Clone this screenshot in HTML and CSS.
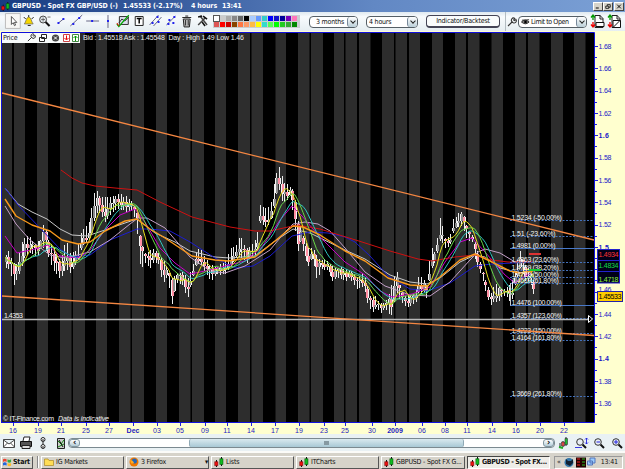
FILE: index.html
```html
<!DOCTYPE html>
<html lang="en">
<head>
  <meta charset="UTF-8" />
  <title>GBPUSD - Spot FX GBP/USD</title>
  <link rel="stylesheet" href="styles.css">
</head>
<body>
  <svg class="defs">
    <symbol id="candles" viewBox="0 0 10 10"><path d="M2.5 3v7M7.5 0v9" stroke="#111"/><path d="M.7 4.7h3.2v4H.7z" fill="#e11" stroke="#600" stroke-width=".5"/><path d="M5.8 1.7h3.2v5.8H5.8z" fill="#1b2" stroke="#040" stroke-width=".5"/></symbol>
    <symbol id="wrench" viewBox="0 0 10 10"><path d="M1 9l4.5-4.5M5.3 5a2 2 0 0 1 2.5-3.6L6.7 3l.6.6 1.7-1A2.2 2.2 0 0 1 5.3 5z" fill="none" stroke="#333" stroke-width="1.1"/></symbol>
    <symbol id="lens" viewBox="0 0 12 12"><path d="M7.5 7.5L11 11" stroke="#111" stroke-width="2"/><circle cx="5" cy="5" r="3.3" fill="#e8eef4" stroke="#333"/></symbol>
    <symbol id="orders" viewBox="0 0 15 15"><path d="M5 1.5h5l3 3v9H5z" fill="#fff" stroke="#222"/><path d="M10 1v4h3" fill="none" stroke="#222"/><path d="M3 1v5M1 3.5L3 1l2 2.5" stroke="#090" fill="none" stroke-width="1.3"/><path d="M3 8v5M1 10.5L3 13l2-2.5" stroke="#e00" fill="none" stroke-width="1.3"/></symbol>
  </svg>

  <div class="titlebar">
    <svg class="app-icon"><use href="#candles"/></svg>
    <span class="t-name">GBPUSD - Spot FX GBP/USD (-)</span>
    <span class="t-price">1.45533 (-2.17%)</span>
    <span class="t-frame">4 hours</span>
    <span class="t-time">13:41</span>
    <div class="win-btns">
      <b><svg viewBox="0 0 8 7"><path d="M1 5.5h4" stroke="#000" stroke-width="1.3"/></svg></b>
      <b><svg viewBox="0 0 8 7"><path d="M3 3V1h4v3.5H5M1 3h4v3H1z" stroke="#000" fill="none"/></svg></b>
      <b><svg viewBox="0 0 8 7"><path d="M1.5 1l5 5M6.500 1l-5 5" stroke="#000" stroke-width="1.2"/></svg></b>
    </div>
  </div>

  <div class="toolbar">
    <!-- drawing tools -->
    <svg class="tools" viewBox="0 0 215 19">
      <path d="M5.500 1.500h15v15h-15z" fill="#f7f7f5" stroke="#bbb"/>
      <path d="M11.500 4.500v8l1.800-1.800 1.300 3 1.200-.6-1.300-2.700h2.500z" fill="#fff" stroke="#333" stroke-width=".8"/>
      <path d="M24.500 12c2-2 1.500-6.500 4.500-7 3 .5 2.500 5 4.500 7z" fill="#f6d600" stroke="#666" stroke-width=".7"/><path d="M24 5l2 2M34 5l-2 2M29 3v2M28 13.500h3" stroke="#222"/>
      <circle cx="43.500" cy="7.500" r="3.500" fill="#dfe6ea" stroke="#444"/><path d="M46 10l4 4" stroke="#111" stroke-width="2"/><path d="M43.500 5.500v4M41.500 7.500h4M48 5h3" stroke="#555" stroke-width=".8"/>
      <g stroke="#557" stroke-width=".9">
        <path d="M59 11l5-4M71 14L83 3M87 9h13M109 3v13M151 13l9-10M155 14l8-9M168 13l9-9"/>
      </g>
      <g fill="#22e">
        <path d="M58 10h2v2h-2zM63 6h2v2h-2zM73 11h2v2h-2zM79 5h2v2h-2zM92 8h2v2h-2zM108 8h2v2h-2zM153 10h2v2h-2zM158 4h2v2h-2zM159 9h2v2h-2zM169 11h2v2h-2zM175 4h2v2h-2zM170 7h2v2h-2zM174 10h2v2h-2z"/>
      </g>
      <path d="M120.500 4.500h9v8h-9z" fill="#dde" stroke="#333"/><path d="M120 11l3-4 3 2 4-4" fill="none" stroke="#333"/><path d="M118 12l2 2.500L130 3" fill="none" stroke="#0a0" stroke-width="1.300"/><path d="M118 11l2 3" stroke="#e00"/>
      <path d="M136.500 4.500h8v9h-8z" fill="#fff" stroke="#222"/><path d="M138 6.500h5M140.500 6.500v5" stroke="#000" stroke-width="1.500"/>
      <path d="M185 7h7l-.8 8h-5.400zM184 5.500h9M187 4h3" fill="#bbb" stroke="#222"/><path d="M187.300 8v5.500M190 8v5.500" stroke="#333"/>
      <path d="M200 13l7-7M202 4l7 9" stroke="#444" stroke-width="1.500"/><path d="M200 5l4-1M205 4l4 3M204 10l3 4" stroke="#111" stroke-width="1.600"/>
    </svg>
    <div class="palette" id="palette"></div>
    <div class="select period">3 months<i></i></div>
    <div class="select frame">4 hours<i></i></div>
    <div class="button">Indicator/Backtest</div>
    <i class="divider"></i>
    <svg class="wrench"><use href="#wrench"/></svg>
    <div class="select order">
      <svg viewBox="0 0 10 8"><path d="M.5 4q4-4 8.500 0-4 4-8.500 0zM1 2l8-.5" fill="#888" stroke="#222"/><circle cx="5" cy="4" r="1.500"/></svg>
      Limit to Open<i></i>
    </div>
    <svg class="order-icon" viewBox="0 0 15 15"><use href="#orders"/><path d="M6 8.500h8v4H6z" fill="#fff" stroke="#111"/></svg>
    <svg class="order-icon" viewBox="0 0 15 15"><use href="#orders"/><path d="M6 6.500h7.500v7H6zM6 13.500l7-7" fill="#fff" stroke="#111"/></svg>
  </div>

  <div class="chart">
    <svg id="plot" viewBox="0 31 625 403">
      <rect x="2" y="33" width="592" height="389" fill="#000"/>
      <g id="bands"></g>
      <g id="candleLayer" shape-rendering="crispEdges"></g>
      <g id="averages" fill="none" stroke-linejoin="round"></g>
      <g id="levels"></g>
      <!-- support line and trend channel -->
      <path d="M2 319.500h586" stroke="#b8b8b8" stroke-width="1.300"/>
      <path d="M588.500 315.500v7l4-3.500z" fill="#000" stroke="#fff"/>
      <path d="M2 93L594 240M2 296L594 335.500" stroke="#f58742" stroke-width="1.350"/>
      <text x="4" y="318" class="white" textLength="19">1.4353</text>
      <text x="3" y="421" class="white" textLength="51">© IT-Finance.com</text>
      <text x="58" y="421" class="white italic" textLength="51">Data is indicative</text>
      <path d="M1.500 422V32.500H594.500V422.500H1" fill="none" stroke="#11d" stroke-width="1"/>
      <g id="axes"></g>
      <g id="tags"></g>
    </svg>
    <div class="price-bar">
      <div class="price-tools">
        <span>Price</span>
        <svg viewBox="0 0 52 10">
          <use href="#wrench" width="9" height="9" x="0"/>
          <path d="M14.500 1.500h5v4h-5zM12.500 4.500h5v4h-5z" fill="#fff" stroke="#222"/>
          <circle cx="28.500" cy="5" r="3.600" fill="#444"/><path d="M27 3.500l3 3M30 3.500l-3 3" stroke="#fff"/>
          <path d="M36.500 1.500h6v7h-6z" fill="#fff" stroke="#c44"/><path d="M39.500 2.500v4M37.500 5l2 2 2-2" stroke="#e00" fill="none"/>
          <path d="M45.500 1.500h6v7h-6z" fill="#fff" stroke="#484"/><path d="M48.500 8V3M46.500 5l2-2 2 2" stroke="#090" fill="none"/>
        </svg>
      </div>
      <span class="quote">Bid : 1.45518 Ask : 1.45548&nbsp; Day : High 1.49 Low 1.46</span>
    </div>
  </div>

  <div class="footer">
    <svg class="foot-icons" viewBox="0 0 68 16">
      <path d="M3.500 4.500h11v8h-11zM3.500 5l5.500 4 5.500-4M3.500 12l4-4M14.500 12l-4-4" fill="#fff" stroke="#333" stroke-width=".9"/>
      <path d="M23 6l1-4h6l-1 4" fill="#fff" stroke="#222"/><path d="M20.500 6.500h11v5h-11z" fill="#555" stroke="#111"/><path d="M22 10.500h8v3h-8z" fill="#ddd" stroke="#222"/>
      <g fill="#fff" stroke="#222"><circle cx="43" cy="4.500" r="2"/><circle cx="43" cy="11.500" r="2"/></g><path d="M43 4v2M43 11v2M43 7v2" stroke="#222"/>
      <path d="M57.500 3.500h7v10h-7z" fill="#ccc" stroke="#222"/><path d="M58 6l3 3 3-4M58 12l6-3" stroke="#181" fill="none"/><path d="M59 5l4 7" stroke="#111"/>
    </svg>
    <div class="scroll">
      <b class="arrow">‹</b>
      <div class="thumb"><i></i></div>
      <b class="arrow right">›</b>
    </div>
    <svg class="zoom-icons" viewBox="0 0 66 16">
      <path d="M2 13V8M5 12V6M8 11V2" stroke="#222"/><path d="M3.500 7h3v4h-3z" fill="#d44" stroke="#333" stroke-width=".6"/><path d="M7 3.500h2.500v6H7z" fill="#2b3" stroke="#333" stroke-width=".6"/><path d="M1 12l4 1" stroke="#2a2" stroke-width="2"/>
      <use href="#lens" x="17" y="2" width="12" height="12"/><path d="M28.500 3v6M27 4.500L28.500 3 30 4.500M27 7.500L28.500 9 30 7.500M17 12.500h7" fill="none" stroke="#22d" stroke-width=".9"/>
      <use href="#lens" x="35" y="2" width="12" height="12"/><path d="M38.500 7h3.500" stroke="#22d"/>
      <use href="#lens" x="53" y="2" width="12" height="12"/><path d="M56 7h4M58 5v4" stroke="#22d"/>
    </svg>
  </div>

  <div class="taskbar">
    <div class="task start"><svg viewBox="0 0 10 10"><path d="M0 2q2-1.500 4 0v3q-2-1.500-4 0z" fill="#e43"/><path d="M5 2q2 1.500 4 0v3q-2 1.500-4 0z" fill="#3a4"/><path d="M0 6q2-1.500 4 0v3q-2-1.500-4 0z" fill="#26d"/><path d="M5 6q2 1.500 4 0v3q-2 1.500-4 0z" fill="#fb2"/></svg>Start</div>
    <i class="grip"></i>
    <div class="task folder"><svg viewBox="0 0 10 10"><path d="M.5 2h3.500l1 1.500h4.500v5h-9z" fill="#fd5" stroke="#a82" stroke-width=".7"/></svg>IG Markets</div>
    <div class="task firefox"><svg viewBox="0 0 10 10"><circle cx="5" cy="5" r="4.500" fill="#e70"/><circle cx="5.300" cy="4" r="2.600" fill="#26b"/><path d="M1 3q3 0 4 3-2 1-3 0z" fill="#fa2"/></svg>3 Firefox<em>▾</em></div>
    <div class="task lists"><svg><use href="#candles"/></svg>Lists</div>
    <div class="task itcharts"><svg><use href="#candles"/></svg>ITCharts</div>
    <div class="task gbp"><svg><use href="#candles"/></svg>GBPUSD - Spot FX G...</div>
    <div class="task active"><svg><use href="#candles"/></svg>GBPUSD - Spot FX...</div>
    <div class="tray">
      <span>«</span>
      <svg viewBox="0 0 32 11"><circle cx="5" cy="5.500" r="4.500" fill="#37a"/><path d="M2 2l2 2h3l2-2v4L6 9 2 7z" fill="#123"/><path d="M12 .5h10v10H12z" fill="#200"/><path d="M13 2h3M13 5h3M13 8h3" stroke="#e22"/><path d="M18 2h3M18 5h3M18 8h3" stroke="#2b2"/><path d="M26 1h5v5h-5zM23.500 4h5v4h-5z" fill="#9cf" stroke="#57b"/></svg>
      <span class="clock">13:41</span>
    </div>
  </div>

  <script src="chart.js"></script>
</body>
</html>
```
FILE: styles.css
```css
body {
  margin: 0;
  width: 625px;
  height: 469px;
  overflow: hidden;
  display: flex;
  flex-direction: column;
  background: #ffffcf;
  font-family: "DejaVu Sans Condensed", "DejaVu Sans", sans-serif;
  font-size: 7px;
  letter-spacing: -0.2px;
  color: #111;
  white-space: nowrap;
}

body * {
  box-sizing: border-box;
}

svg {
  display: block;
  flex: none;
}

.defs {
  position: absolute;
  width: 0;
  height: 0;
}

/* title bar */
.titlebar {
  height: 12px;
  flex: none;
  display: flex;
  align-items: center;
  padding: 0 1px 0 1px;
  background: linear-gradient(90deg, #173c82 0, #35599c 25%, #6288c4 60%, #7ba0d5 100%);
  color: #fff;
  font: bold 7px "DejaVu Sans Condensed", sans-serif;
  letter-spacing: -0.1px;
}

.app-icon {
  width: 9px;
  height: 9px;
}

.t-name {
  width: 113px;
  padding-left: 2px;
}

.t-price {
  width: 68px;
}

.t-frame {
  width: 31px;
}

.win-btns {
  display: flex;
  margin-left: auto;
}

.win-btns b {
  width: 10px;
  height: 9px;
  padding: 0 1px;
  background: #d6d3ca;
  border: 1px solid #fff;
  border-right-color: #444;
  border-bottom-color: #444;
}

.win-btns b:last-child {
  margin-left: 1px;
}

.win-btns svg {
  width: 6px;
  height: 7px;
}

/* toolbar */
.toolbar {
  height: 19px;
  flex: none;
  display: flex;
  align-items: center;
  background: linear-gradient(#dfe9f0, #f8fbfd 25%, #e6eef2);
}

.tools {
  width: 213px;
  height: 19px;
}

.palette {
  display: grid;
  grid-template-columns: repeat(14, 5px);
  grid-auto-rows: 5px;
  gap: 1px;
  width: 87px;
  padding: 1px;
  background: #c9ced0;
}

.palette span:first-child {
  outline: 1px solid #555;
}

.select {
  height: 12px;
  display: flex;
  align-items: center;
  border: 1px solid #555f66;
  border-radius: 4px;
  background: #fff;
}

.select i {
  width: 10px;
  height: 10px;
  margin-left: auto;
  border-left: 1px solid #789;
  border-radius: 3px;
  background: linear-gradient(#fff, #b9ced8);
}

.select i::before {
  content: "";
  display: block;
  width: 3px;
  height: 3px;
  margin: 2px 0 0 3px;
  border: solid #222;
  border-width: 0 1px 1px 0;
  transform: rotate(45deg);
}

.period {
  width: 49px;
  margin-left: 9px;
  padding-left: 6px;
}

.frame {
  width: 52px;
  margin-left: 8px;
  padding-left: 2px;
}

.button {
  width: 74px;
  height: 13px;
  margin-left: 8px;
  border: 1px solid #445;
  border-bottom-width: 2px;
  border-radius: 4px;
  background: #fafcfc;
  line-height: 10px;
  text-align: center;
}

.divider {
  width: 1px;
  height: 19px;
  margin-left: 5px;
  background: #b3bcc2;
}

.wrench {
  width: 10px;
  height: 10px;
  margin-left: 1px;
}

.order {
  width: 69px;
  margin-left: 1px;
  padding-left: 2px;
}

.order svg {
  width: 9px;
  height: 8px;
  margin-right: 1px;
}

.order {
  letter-spacing: -0.4px;
}

.order-icon {
  width: 15px;
  height: 15px;
  margin-left: 3px;
}

.order-icon + .order-icon {
  margin-left: 2px;
}

/* chart */
.chart {
  position: relative;
  height: 403px;
  flex: none;
}

.chart > svg {
  width: 625px;
  height: 403px;
}

.chart text {
  font: 7px "Liberation Sans", sans-serif;
  letter-spacing: 0;
}

.chart .white {
  fill: #f4f4f4;
}

.chart .italic {
  font-style: italic;
}

.chart .axis {
  fill: #1a1ac8;
}

.chart .strong {
  font-weight: bold;
}

.price-bar {
  position: absolute;
  left: 2px;
  top: 2px;
  display: flex;
  align-items: center;
}

.price-tools {
  display: flex;
  align-items: center;
  justify-content: space-between;
  width: 78px;
  height: 10px;
  padding: 0 1px;
  background: #f8fbfb;
}

.price-tools svg {
  width: 52px;
  height: 10px;
}

.quote {
  height: 10px;
  padding: 0 2px 0 3px;
  color: #eee;
  font: 7px/10px "Liberation Sans", sans-serif;
  letter-spacing: -0.14px;
}

/* scroll strip */
.footer {
  height: 17px;
  flex: none;
  display: flex;
  align-items: center;
  background: #e9f1f4;
}

.foot-icons {
  width: 68px;
  height: 16px;
}

.scroll {
  width: 487px;
  height: 10px;
  display: flex;
  border: 1px solid #7b8990;
  border-radius: 4px;
  background: #fff;
}

.arrow {
  width: 11px;
  border: 1px solid #8297a0;
  border-radius: 3px;
  background: linear-gradient(#fff, #b2ccd8);
  font-size: 9px;
  line-height: 5px;
  text-align: center;
}

.arrow.right {
  margin-left: auto;
}

.thumb {
  width: 275px;
  margin-left: 109px;
  border: 1px solid #8fa9b5;
  border-width: 0 1px;
  border-radius: 2px;
  background: linear-gradient(#d9e9ef, #a8c8d5);
}

.thumb i {
  display: block;
  width: 5px;
  height: 4px;
  margin: 2px auto 0;
  background: #8699a2;
}

.zoom-icons {
  width: 66px;
  height: 16px;
  margin-left: 3px;
}

/* task bar */
.taskbar {
  flex: 1;
  display: flex;
  align-items: center;
  gap: 2px;
  padding: 2px 1px 0;
  border-top: 2px solid #fbfbf8;
  background: #d6d3ca;
}

.task {
  width: 83px;
  height: 13px;
  flex: none;
  display: flex;
  align-items: center;
  gap: 2px;
  padding-left: 2px;
  border: 1px solid #fff;
  border-right-color: #555;
  border-bottom-color: #555;
}

.task svg {
  width: 10px;
  height: 10px;
}

.task em {
  margin-left: auto;
  font-style: normal;
}

.start {
  width: 32px;
  padding-left: 1px;
  gap: 1px;
  font-weight: bold;
}

.start svg {
  width: 9px;
}

.grip {
  width: 2px;
  height: 12px;
  margin: 0 0 0 2px;
  border-left: 1px solid #888;
  border-right: 1px solid #fff;
}

.gbp {
  width: 84px;
}

.active {
  border-color: #444 #fff #fff #444;
  background: #efede8;
  font-weight: bold;
  letter-spacing: -0.35px;
}

.tray {
  width: 69px;
  height: 13px;
  flex: none;
  margin-left: 2px;
  display: flex;
  align-items: center;
  gap: 3px;
  padding-left: 2px;
  border: 1px solid #999;
  border-right-color: #fff;
  border-bottom-color: #fff;
}

.tray svg {
  width: 32px;
  height: 11px;
}

.clock {
  margin-left: 2px;
}
```
FILE: chart.js
```js
const NS = "http://www.w3.org/2000/svg";

function add(parent, tag, attrs, text) {
  const el = document.createElementNS(NS, tag);
  for (const k in attrs) el.setAttribute(k, attrs[k]);
  if (text) el.textContent = text;
  document.getElementById(parent).appendChild(el);
}

// colour palette, two rows
const colors = ["#fff", "#ccc", "#aaa", "#888", "#666", "#000", "#acf", "#69f", "#3cc", "#00f", "#11c", "#009", "#70b", "#f7b",
  "#d55", "#f00", "#c00", "#840", "#f74", "#f96", "#fb4", "#ff0", "#3dc", "#5f5", "#0f0", "#2c2", "#3a3", "#080"];
const palette = document.getElementById("palette");
colors.forEach(c => {
  const s = document.createElement("span");
  s.style.background = c;
  palette.appendChild(s);
});

// day bands
const bands = [[2,12],[14,25],[37,48],[60,71.500],[73,85],[96,107],[119,130.500],[132,144],[156,167],[179,190.500],[192,204],[215,226],[238,250],[251.500,263],[275.500,286],[298,309.500],[311,323],[334,344],[345.500,357],[359,370.500],[382,394],[395.500,407],[409,420],[432,443],[455,466],[468,479.500],[491.500,503],[515,526],[528,539.500],[551,563],[574,585.500]];
bands.forEach(b => add("bands", "rect", { x: b[0], y: 33, width: b[1] - b[0], height: 389, fill: "#2d2d2d" }));

// x, high, low
const range = [[5,255,268],[9,252,268],[13,263,285],[17,265,279],[20,245,270],[25,237,256],[30,238,252],[36,245,257],[41,238,248],[44,219,248],[47,240,252],[52,245,268],[60,262,278],[66,240,268],[70,255,272],[77,250,262],[81,232,247],[88,226,240],[92,204,234],[95,188,213],[100,198,212],[105,199,222],[112,196,212],[119,195,208],[127,198,212],[133,203,210],[137,212,235],[140,240,270],[145,253,263],[150,251,268],[153,249,263],[158,254,262],[162,260,282],[167,267,278],[172,280,305],[176,272,283],[183,273,285],[187,280,299],[192,270,280],[196,252,265],[200,250,262],[205,259,272],[210,266,281],[216,267,275],[225,262,273],[231,249,265],[236,246,258],[240,235,256],[246,250,263],[252,245,256],[257,238,252],[260,206,222],[265,210,226],[270,208,222],[274,182,205],[278,165,185],[281,176,200],[285,185,202],[290,187,195],[294,192,220],[297,222,252],[301,228,240],[304,241,255],[308,250,266],[312,248,258],[317,257,280],[322,261,268],[327,261,270],[332,268,280],[338,267,278],[345,270,280],[350,271,278],[357,277,290],[363,274,285],[368,290,305],[371,299,312],[376,297,308],[380,304,313],[385,302,308],[389,293,315],[392,285,314],[396,268,292],[400,287,300],[404,297,306],[410,295,306],[415,293,303],[418,278,293],[424,280,292],[427,287,300],[430,248,270],[435,252,262],[440,217,238],[445,238,248],[450,237,245],[453,220,232],[457,216,226],[462,210,226],[467,227,240],[472,236,242],[475,244,262],[479,260,270],[485,280,290],[490,295,306],[494,287,300],[498,284,302],[502,290,296],[507,287,297],[511,285,303],[515,270,283],[520,251,268],[525,266,280],[530,271,283],[533,279,292],[535,288,297]];

function at(x, col) {
  for (let i = 1; i < range.length; i++) {
    if (range[i][0] >= x) {
      const a = range[i - 1], b = range[i];
      return a[col] + (b[col] - a[col]) * (x - a[0]) / (b[0] - a[0]);
    }
  }
  return range[range.length - 1][col];
}

const closes = [];
let prev = 262;
for (let i = 0; i < 198; i++) {
  const x = 5.500 + i * 2.680;
  const hi = at(x, 1), lo = at(x, 2), h = lo - hi;
  const n = Math.abs(Math.sin(i * 12.9898) * 43758.5453) % 1;
  const close = hi + h * (0.200 + n * 0.600);
  const open = Math.max(hi + 1, Math.min(lo - 1, prev));
  const wick = n * 4 - 1;
  const top = Math.min(open, close), body = Math.max(1.500, Math.abs(open - close));
  const px = Math.round(x);
  add("candleLayer", "rect", { x: px, y: hi - wick * 0.600, width: 1, height: h + wick, fill: "#eee" });
  add("candleLayer", "rect", { x: px - 1, y: top, width: 3, height: body, fill: close > open ? "#ff8fa3" : "#8c8c8c" });
  add("candleLayer", "rect", { x: i % 3 ? px - 1 : px + 1, y: top, width: 1, height: body, fill: "#f4f4f4" });
  closes.push([x, close]);
  prev = close;
}

function sma(n) {
  return closes.map((c, i) => {
    const part = closes.slice(Math.max(0, i - n + 1), i + 1);
    return [c[0].toFixed(1), (part.reduce((s, p) => s + p[1], 0) / part.length).toFixed(1)];
  }).join(" ");
}

// long averages
const lines = [
  ["#c8c8c8", "5,188 18,204 32,212 47,219 60,229 72,235 87,236 105,230 122,224 137,219 155,233 175,242 190,251 215,257 230,258 255,256 275,241 293,229 310,233 345,250 365,259 390,275 410,282 427,284 440,278 460,262 475,255 485,257 500,268 520,273 532,270"],
  ["#1c1cd0", "5,188 18,205 40,228 60,249 72,257 90,255 110,240 137,229 150,229 170,231 190,242 215,258 235,268 253,266 270,256 292,236 310,232 328,233 345,237 355,242 370,256 388,276 410,289 427,291 450,283 475,266 492,264 533,262"],
  ["#c4a0c8", "5,206 16,224 30,240 50,255 65,258 90,252 110,240 130,224 138,218 147,218 165,228 190,257 210,271 225,273 245,266 270,250 285,232 293,224 305,222 318,224 330,231 345,248 365,272 385,286 410,295 430,296 450,282 470,260 478,252 485,249 500,253 515,262 525,263"],
  ["#c800c8", "5,236 17,253 35,249 48,245 60,256 78,258 90,250 105,230 120,215 135,209 145,222 160,248 175,263 190,274 205,271 225,266 245,261 262,247 280,220 292,206 302,216 318,235 345,262 365,275 380,291 392,297 412,294 430,287 445,262 460,242 472,238 485,252 505,275 515,283 525,276 532,273"],
  ["#d01010", "61,170 72,178 82,183 95,186 115,188 137,190 160,202 192,217 230,227 255,231 270,231 297,225 320,229 362,242 390,251 418,259 432,261 455,257 475,255 492,260 508,262 533,262"]
];
lines.forEach(l => add("averages", "polyline", { points: l[1], stroke: l[0] }));
add("averages", "polyline", { points: sma(13), stroke: "#2fc6c0" });
add("averages", "polyline", { points: sma(9), stroke: "#68d848" });
add("averages", "polyline", { points: sma(5), stroke: "#e4e01c" });
add("averages", "polyline", { points: "5,199 16,216 32,225 50,231 62,240 78,244 90,242 105,231 125,221 137,219 150,229 165,238 192,256 215,260 228,261 255,257 275,241 293,226 303,227 320,235 345,251 365,261 388,278 410,285 427,286 440,277 460,260 475,254 490,261 510,271 520,273 533,271", stroke: "#f9981c", "stroke-width": 1.400 });

// retracement levels
const levels = [[220.500,"1.5234 (-50.00%)"],[236.500,"1.51 (-23.60%)"],[248.500,"1.4981 (0.00%)",1],[262.500,"1.4863 (23.60%)"],[270.500,"1.4789 (38.20%)"],[277.500,"1.4729 (50.00%)"],[283.500,"1.4669 (61.80%)"],[305.500,"1.4476 (100.00%)",1],[318.500,"1.4357 (123.60%)"],[333.500,"1.4223 (150.00%)"],[340.500,"1.4164 (161.80%)"],[396.500,"1.3669 (261.80%)"]];
levels.forEach(l => {
  add("levels", "path", { d: `M510 ${l[0]}H594`, stroke: l[2] ? "#4878c8" : "#4472bc", "stroke-dasharray": l[2] ? "none" : "2 1.500" });
  add("levels", "text", { x: 511.500, y: l[0] - 1, class: "white", textLength: l[1].length * 3.150 }, l[1]);
});
add("levels", "path", { d: "M510.500 283V305.500", stroke: "#ccc" });
add("levels", "path", { d: "M529 254H541", stroke: "#d33", "stroke-width": 2 });
add("levels", "path", { d: "M529 270H541", stroke: "#1c3", "stroke-width": 2 });

// price scale, the label at 1.48 sits under the average tags
for (let i = 0; i < 17; i++) {
  const y = 46 + i * 22.330, p = (1.680 - i * 0.020).toFixed(2);
  add("axes", "path", { d: `M595 ${Math.round(y) + .5}h3M595 ${Math.round(y + 11) + .5}h2`, stroke: "#22d" });
  if (p === "1.48") continue;
  const round = p.endsWith("0");
  add("axes", "text", { x: 598.500, y: y + (p === "1.46" ? 0 : 2.600), class: round ? "axis strong" : "axis", textLength: round ? 10.500 : 13 }, round ? p.slice(0, 3) : p);
}

// time scale
const days = [[13,"16"],[38,"19"],[61,"21"],[86,"25"],[109,"27"],[133,"Dec"],[157,"03"],[180,"05"],[205,"09"],[227,"11"],[251,"14"],[275,"17"],[299,"19"],[324,"23"],[345,"25"],[372,"30"],[395,"2009"],[422,"06"],[445,"08"],[467,"11"],[492,"14"],[516,"16"],[540,"20"],[564,"22"]];
days.forEach(d => {
  add("axes", "path", { d: `M${d[0] + .5} 423v3`, stroke: "#22d" });
  add("axes", "text", { x: d[0], y: 432.500, "text-anchor": "middle", class: d[1].length > 2 ? "axis strong" : "axis" }, d[1]);
});

// price tags over the scale
add("tags", "rect", { x: 597.500, y: 249.500, width: 22, height: 33.500, fill: "#000018", stroke: "#22c" });
add("tags", "path", { d: "M598 260.500h21M598 271.500h21", stroke: "#22c" });
[["1.4934", 256.500, "#f33"], ["1.4834", 268, "#1d4"], ["1.4718", 281.500, "#8e4"]].forEach(t => {
  add("tags", "text", { x: 598.500, y: t[1], fill: t[2], textLength: 20 }, t[0]);
});
add("tags", "rect", { x: 597.500, y: 291.500, width: 25, height: 10, fill: "#fc0", stroke: "#22a" });
add("tags", "text", { x: 598.500, y: 299, fill: "#000", textLength: 23 }, "1.45533");
```
